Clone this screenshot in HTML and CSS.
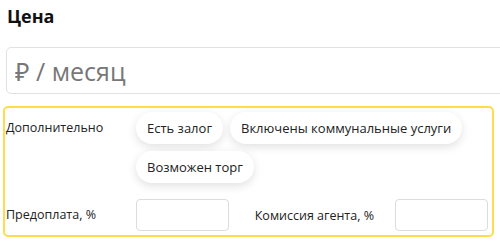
FILE: index.html
```html
<!DOCTYPE html>
<html lang="ru">
<head>
    <meta charset="UTF-8">
    <meta name="viewport" content="width=device-width, initial-scale=1.0">
    <title>Цена</title>
    <link rel="stylesheet" href="styles.css">
</head>
<body>
    <div class="page">
        <h2 class="title">Цена</h2>
        <input type="text" class="price-input" placeholder="₽ / месяц" />

        <div class="extra">
            <div class="extra-row">
                <span class="extra-label">Дополнительно</span>
                <div class="chips">
                    <button class="chip">Есть залог</button>
                    <button class="chip">Включены коммунальные услуги</button>
                    <button class="chip">Возможен торг</button>
                </div>
            </div>
            <div class="extra-row percent-row">
                <span class="extra-label">Предоплата, %</span>
                <input type="text" class="small-input" />
                <span class="fee-label">Комиссия агента, %</span>
                <input type="text" class="small-input" />
            </div>
        </div>
    </div>
</body>
</html>
```

FILE: styles.css
```css
body {
    font-family: "Open Sans", "Noto Sans", Arial, sans-serif;
    margin: 0;
    padding: 0;
    background-color: white;
    color: #222;
    overflow: hidden;
}

.page {
    width: 500px;
    height: 242px;
    overflow: hidden;
}

.title {
    font-size: 18px;
    font-weight: 700;
    margin: 0;
    padding: 4px 0 0 7px;
    height: 47px;
    box-sizing: border-box;
    color: #111;
}

.price-input {
    display: block;
    margin-left: 6px;
    width: 520px;
    height: 47px;
    box-sizing: border-box;
    border: 1px solid #e2e2e2;
    border-radius: 5px;
    padding: 0 8px;
    font-family: inherit;
    font-size: 25px;
    outline: none;
}

.price-input::placeholder {
    color: #777;
}

.extra {
    margin: 12px 0 0 3px;
    width: 491px;
    height: 131px;
    box-sizing: border-box;
    border: 2px solid #ffdb4d;
    border-radius: 5px;
    padding: 4px 4px 4px 1px;
}

.extra-row {
    display: flex;
    align-items: flex-start;
}

.extra-label {
    width: 130px;
    flex-shrink: 0;
    font-size: 12.5px;
    line-height: 32px;
    white-space: nowrap;
}

.chips {
    display: flex;
    flex-wrap: wrap;
    gap: 7px;
}

.chip {
    height: 32px;
    padding: 0 11px;
    border: none;
    border-radius: 16px;
    background-color: white;
    box-shadow: 0 3px 10px rgba(0, 0, 0, 0.12);
    font-family: inherit;
    font-size: 13px;
    color: #222;
}

.percent-row {
    margin-top: 16px;
    align-items: center;
}

.small-input {
    width: 93px;
    height: 32px;
    box-sizing: border-box;
    border: 1px solid #dcdcdc;
    border-radius: 4px;
    outline: none;
}

.fee-label {
    font-size: 12.5px;
    white-space: nowrap;
    margin-left: auto;
    margin-right: 21px;
}
```
